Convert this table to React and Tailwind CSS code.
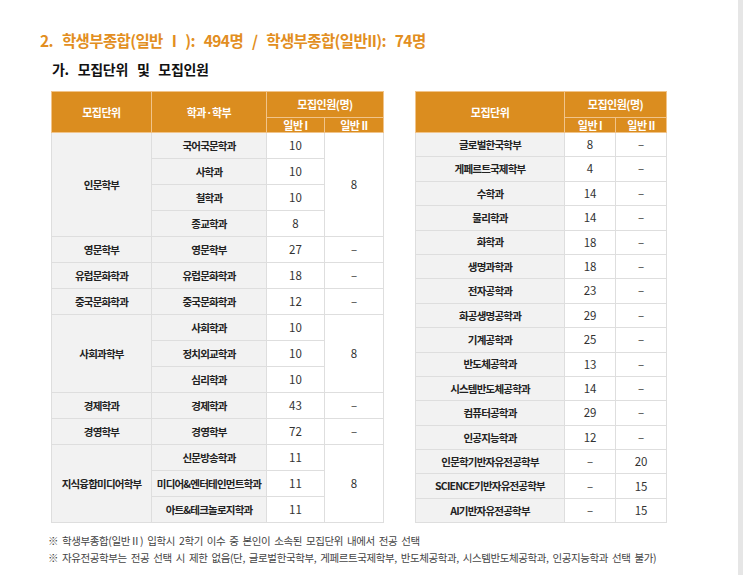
import React from 'react';

const leftRows = [
  { unit: '인문학부', span: 4, dept: '국어국문학과', g1: '10', g2: '8', g2span: 4 },
  { dept: '사학과', g1: '10' },
  { dept: '철학과', g1: '10' },
  { dept: '종교학과', g1: '8' },
  { unit: '영문학부', span: 1, dept: '영문학부', g1: '27', g2: '–', g2span: 1 },
  { unit: '유럽문화학과', span: 1, dept: '유럽문화학과', g1: '18', g2: '–', g2span: 1 },
  { unit: '중국문화학과', span: 1, dept: '중국문화학과', g1: '12', g2: '–', g2span: 1 },
  { unit: '사회과학부', span: 3, dept: '사회학과', g1: '10', g2: '8', g2span: 3 },
  { dept: '정치외교학과', g1: '10' },
  { dept: '심리학과', g1: '10' },
  { unit: '경제학과', span: 1, dept: '경제학과', g1: '43', g2: '–', g2span: 1 },
  { unit: '경영학부', span: 1, dept: '경영학부', g1: '72', g2: '–', g2span: 1 },
  { unit: '지식융합미디어학부', span: 3, dept: '신문방송학과', g1: '11', g2: '8', g2span: 3 },
  { dept: '미디어&엔터테인먼트학과', g1: '11' },
  { dept: '아트&테크놀로지학과', g1: '11' },
];

const rightRows = [
  ['글로벌한국학부', '8', '–'],
  ['게페르트국제학부', '4', '–'],
  ['수학과', '14', '–'],
  ['물리학과', '14', '–'],
  ['화학과', '18', '–'],
  ['생명과학과', '18', '–'],
  ['전자공학과', '23', '–'],
  ['화공생명공학과', '29', '–'],
  ['기계공학과', '25', '–'],
  ['반도체공학과', '13', '–'],
  ['시스템반도체공학과', '14', '–'],
  ['컴퓨터공학과', '29', '–'],
  ['인공지능학과', '12', '–'],
  ['인문학기반자유전공학부', '–', '20'],
  ['SCIENCE기반자유전공학부', '–', '15'],
  ['AI기반자유전공학부', '–', '15'],
];

const font = { fontFamily: '"Noto Sans CJK KR", "Noto Sans", sans-serif' };

const th = 'bg-[#db8d1f] text-white font-bold text-[11px] tracking-[-0.5px] border border-[#f1c48a] p-0';
const nameCell = 'bg-[#f2f2f2] text-[#222] font-bold text-[10.5px] tracking-[-0.8px] border border-[#dedede] p-0 whitespace-nowrap';
const numCell = 'bg-white text-[#333] text-[11.5px] border border-[#dedede] p-0';

function Header({ first, second }) {
  return (
    <thead>
      <tr className="h-[26px]">
        <th rowSpan={2} className={th}>{first}</th>
        {second && <th rowSpan={2} className={th}>{second}</th>}
        <th colSpan={2} className={th}>모집인원(명)</th>
      </tr>
      <tr className="h-[15px]">
        <th className={`${th} text-[10px] leading-none`}>일반 I</th>
        <th className={`${th} text-[10px] leading-none`}>일반 II</th>
      </tr>
    </thead>
  );
}

export default function App() {
  return (
    <div className="flex bg-white w-[743px] h-[575px] overflow-hidden" style={font}>
      <div className="w-[738px] pl-[40px] pt-[29px]">
        <h1 className="text-[15.5px] font-bold text-[#e28e21] tracking-[-0.6px] leading-[22px] [word-spacing:6px]">
          2. 학생부종합(일반 I ): 494명 / 학생부종합(일반II): 74명
        </h1>
        <h2 className="ml-[12px] mt-[9px] text-[14px] font-bold text-[#111] leading-[18px] tracking-[-0.3px] [word-spacing:6px]">
          가. 모집단위 및 모집인원
        </h2>

        <div className="flex gap-[31px] ml-[11px] mt-[13px] items-start">
          <table className="border-collapse text-center table-fixed w-[332px]">
            <colgroup>
              <col className="w-[100px]" />
              <col className="w-[115px]" />
              <col className="w-[58px]" />
              <col className="w-[59px]" />
            </colgroup>
            <Header first="모집단위" second="학과·학부" />
            <tbody>
              {leftRows.map((r, i) => (
                <tr key={i} className="h-[26px]">
                  {r.unit && <td rowSpan={r.span} className={nameCell}>{r.unit}</td>}
                  <td className={nameCell}>{r.dept}</td>
                  <td className={numCell}>{r.g1}</td>
                  {r.g2 && <td rowSpan={r.g2span} className={numCell}>{r.g2}</td>}
                </tr>
              ))}
            </tbody>
          </table>

          <table className="border-collapse text-center table-fixed w-[251px]">
            <colgroup>
              <col className="w-[149px]" />
              <col className="w-[51px]" />
              <col className="w-[51px]" />
            </colgroup>
            <Header first="모집단위" />
            <tbody>
              {rightRows.map(([name, a, b]) => (
                <tr key={name} className="h-[24.4px]">
                  <td className={nameCell}>{name}</td>
                  <td className={numCell}>{a}</td>
                  <td className={numCell}>{b}</td>
                </tr>
              ))}
            </tbody>
          </table>
        </div>

        <div className="ml-[8px] mt-[9px] text-[10.5px] text-[#444] leading-[17px] tracking-[-0.4px] [word-spacing:2px]">
          <p>※ 학생부종합(일반Ⅱ) 입학시 2학기 이수 중 본인이 소속된 모집단위 내에서 전공 선택</p>
          <p>※ 자유전공학부는 전공 선택 시 제한 없음(단, 글로벌한국학부, 게페르트국제학부, 반도체공학과, 시스템반도체공학과, 인공지능학과 선택 불가)</p>
        </div>
      </div>
      <div className="w-[5px] h-full bg-[#e6e6e6]" />
    </div>
  );
}
